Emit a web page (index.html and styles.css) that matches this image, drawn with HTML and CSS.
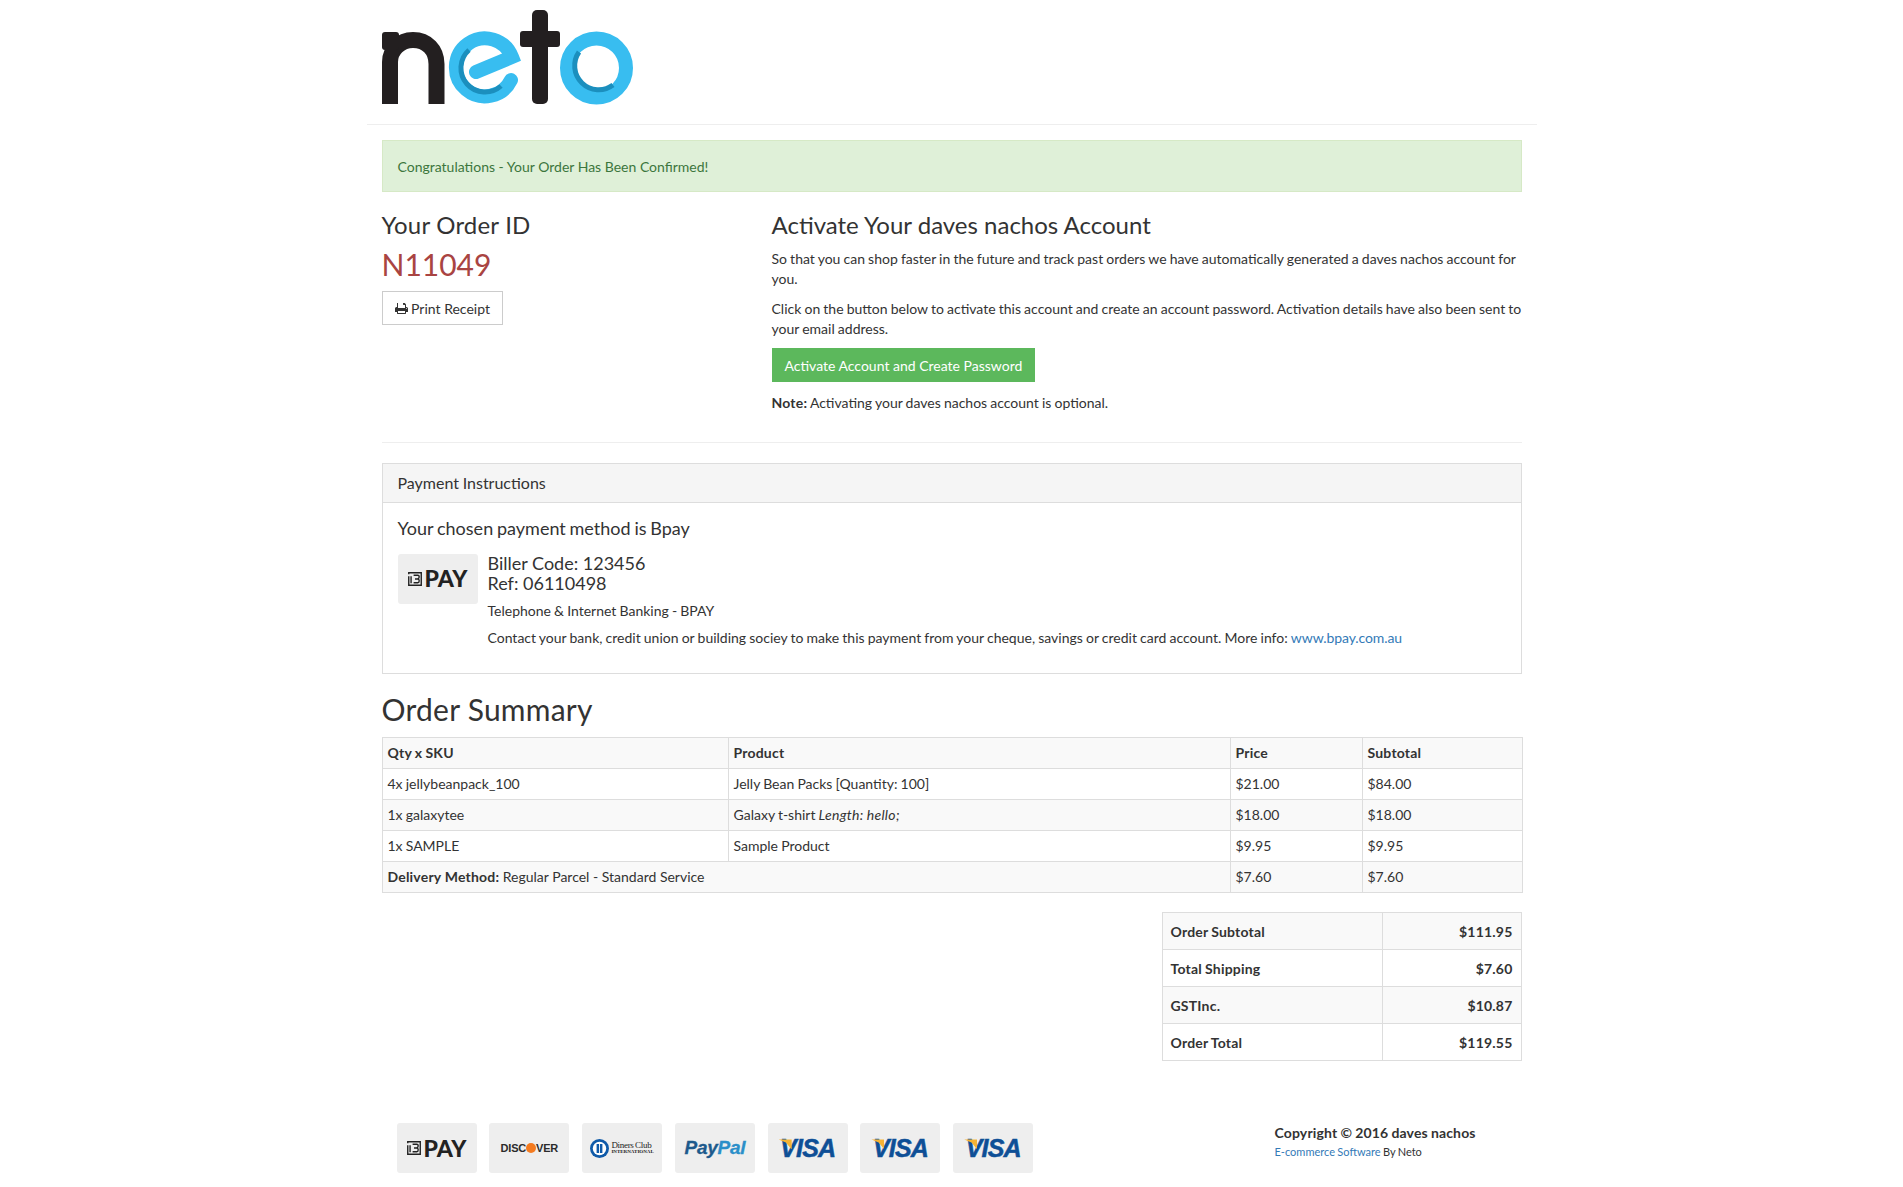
FILE: index.html
```html
<!DOCTYPE html>
<html lang="en">
<head>
    <meta charset="UTF-8">
    <meta name="viewport" content="width=device-width, initial-scale=1.0">
    <title>Order Confirmation</title>
    <link rel="stylesheet" href="styles.css">
</head>
<body>

<div class="container">

    <div class="site-header">
        <svg class="logo" width="260" height="100" viewBox="22 8 260 100" role="img" aria-label="neto">
            <path class="logo-n" d="M30 104V62C30 50 40 40 53 40C67 40 76.500 50 76.500 64V104"/>
            <rect class="logo-t" x="22" y="32" width="17" height="18" rx="3"/>
            <rect class="logo-t" x="172" y="10" width="16" height="94" rx="5"/>
            <rect class="logo-t" x="160" y="31" width="40" height="16" rx="3"/>
            <path class="logo-ring" d="M116 72L152 57A29 29 0 1 0 151 80"/>
            <path class="logo-shade" d="M109 50A24 24 0 0 0 141 86"/>
            <circle class="logo-ring" cx="236.5" cy="68" r="29.5"/>
            <path class="logo-shade" d="M219 52A24 24 0 0 0 253 85"/>
        </svg>
    </div>

    <div class="content">

        <div class="alert">Congratulations - Your Order Has Been Confirmed!</div>

        <div class="order-top">
            <div class="order-id">
                <h3>Your Order ID</h3>
                <div class="order-number">N11049</div>
                <a class="btn btn-default" href="#">
                    <svg class="print-icon" width="13" height="12" viewBox="0 128 1664 1536"><path d="M384 1408h896v-256h-896v256zm0-640h896v-384h-160q-40 0-68-28t-28-68v-160h-640v640zm1152 64q0-26-19-45t-45-19-45 19-19 45 19 45 45 19 45-19 19-45zm128 0v416q0 13-9.5 22.5t-22.5 9.5h-224v160q0 40-28 68t-68 28h-960q-40 0-68-28t-28-68v-160h-224q-13 0-22.5-9.5t-9.5-22.5v-416q0-79 56.5-135.5t135.5-56.5h64v-544q0-40 28-68t68-28h672q40 0 88 20t76 48l152 152q28 28 48 76t20 88v256h64q79 0 135.5 56.5t56.5 135.5z"/></svg>
                    Print Receipt
                </a>
            </div>
            <div class="activate">
                <h3>Activate Your daves nachos Account</h3>
                <p>So that you can shop faster in the future and track past orders we have automatically generated a daves nachos account for you.</p>
                <p>Click on the button below to activate this account and create an account password. Activation details have also been sent to your email address.</p>
                <a class="btn btn-success" href="#">Activate Account and Create Password</a>
                <p class="note"><strong>Note:</strong> Activating your daves nachos account is optional.</p>
            </div>
        </div>

        <hr>

        <div class="panel">
            <div class="panel-heading">Payment Instructions</div>
            <div class="panel-body">
                <h4 class="pay-method">Your chosen payment method is Bpay</h4>
                <div class="pay-info">
                    <div class="pay-card">
                        <svg class="bpay-icon" width="14" height="14" viewBox="0 0 15 15"><path d="M.8 4.5V14.2H14.2V.8H.8V2.5M3.3 4.5V12M6 3.500H10.500Q12 3.500 12 5.200T10.500 7.500H7.500M10.500 7.500Q12 7.500 12 9.500T10.500 11.500H6"/></svg>
                        <span class="bpay-text">PAY</span>
                    </div>
                    <div class="pay-details">
                        <h4>Biller Code: 123456<br>Ref: 06110498</h4>
                        <p class="pay-name">Telephone &amp; Internet Banking - BPAY</p>
                        <p>Contact your bank, credit union or building sociey to make this payment from your cheque, savings or credit card account. More info: <a class="pay-link" href="#">www.bpay.com.au</a></p>
                    </div>
                </div>
            </div>
        </div>

        <h2>Order Summary</h2>

        <table class="table items">
            <colgroup>
                <col class="col-sku">
                <col class="col-product">
                <col class="col-price">
                <col class="col-subtotal">
            </colgroup>
            <tr class="stripe">
                <th>Qty x SKU</th>
                <th>Product</th>
                <th>Price</th>
                <th>Subtotal</th>
            </tr>
            <tr>
                <td>4x jellybeanpack_100</td>
                <td>Jelly Bean Packs [Quantity: 100]</td>
                <td>$21.00</td>
                <td>$84.00</td>
            </tr>
            <tr class="stripe">
                <td>1x galaxytee</td>
                <td>Galaxy t-shirt <em>Length: hello;</em></td>
                <td>$18.00</td>
                <td>$18.00</td>
            </tr>
            <tr>
                <td>1x SAMPLE</td>
                <td>Sample Product</td>
                <td>$9.95</td>
                <td>$9.95</td>
            </tr>
            <tr class="stripe">
                <td class="delivery" colspan="2"><strong>Delivery Method:</strong> Regular Parcel - Standard Service</td>
                <td>$7.60</td>
                <td>$7.60</td>
            </tr>
        </table>

        <div class="totals-wrap">
            <table class="table totals">
                <colgroup>
                    <col class="col-label">
                    <col class="col-amount">
                </colgroup>
                <tr class="stripe">
                    <th>Order Subtotal</th>
                    <th class="amount">$111.95</th>
                </tr>
                <tr>
                    <th>Total Shipping</th>
                    <th class="amount">$7.60</th>
                </tr>
                <tr class="stripe">
                    <th>GSTInc.</th>
                    <th class="amount">$10.87</th>
                </tr>
                <tr>
                    <th>Order Total</th>
                    <th class="amount">$119.55</th>
                </tr>
            </table>
        </div>

        <div class="site-footer">
            <div class="pay-cards">
                <div class="pay-card">
                    <svg class="bpay-icon" width="14" height="14" viewBox="0 0 15 15"><path d="M.8 4.5V14.2H14.2V.8H.8V2.5M3.3 4.5V12M6 3.500H10.500Q12 3.500 12 5.200T10.500 7.500H7.500M10.500 7.500Q12 7.500 12 9.500T10.500 11.500H6"/></svg>
                    <span class="bpay-text">PAY</span>
                </div>
                <div class="pay-card">
                    <span class="discover">DISC<span class="discover-dot"></span>VER</span>
                </div>
                <div class="pay-card diners">
                    <svg width="19" height="19" viewBox="0 0 17 17"><circle cx="8.500" cy="8.500" r="8.500" fill="#0f5aa8"/><circle cx="8.500" cy="8.500" r="6" fill="#fff"/><path d="M7 4.500V12.500M10 4.500V12.500" stroke="#0f5aa8" stroke-width="2.200"/></svg>
                    <span class="diners-text">Diners Club<span class="diners-small">INTERNATIONAL</span></span>
                </div>
                <div class="pay-card">
                    <span class="paypal">Pay<span class="paypal-light">Pal</span></span>
                </div>
                <div class="pay-card visa-card"><span class="visa">VISA</span></div>
                <div class="pay-card visa-card"><span class="visa">VISA</span></div>
                <div class="pay-card visa-card"><span class="visa">VISA</span></div>
            </div>
            <div class="copyright">
                <div class="copy-main">Copyright &copy; 2016 daves nachos</div>
                <div class="copy-small"><a href="#">E-commerce Software</a> By Neto</div>
            </div>
        </div>

    </div>
</div>

</body>
</html>
```

FILE: styles.css
```css
body {
    margin: 0;
    background: white;
    font-family: "Lato", sans-serif;
    font-size: 14px;
    line-height: 20px;
    color: #333;
    word-spacing: -0.45px;
}
a {
    color: #337ab7;
    text-decoration: none;
}
strong {
    letter-spacing: 0.2px;
}
em {
    letter-spacing: 0.3px;
}
.container {
    width: 1170px;
    margin: 0 auto;
}
.site-header {
    height: 125px;
    padding: 8px 15px 0 15px;
    box-sizing: border-box;
    border-bottom: 1px solid #eee;
}
.logo {
    display: block;
}
.logo-n {
    fill: none;
    stroke: #231f20;
    stroke-width: 16;
}
.logo-t {
    fill: #231f20;
}
.logo-ring {
    fill: none;
    stroke: #38bdf0;
    stroke-width: 14;
    stroke-linecap: round;
}
.logo-shade {
    fill: none;
    stroke: #1b8fbe;
    stroke-width: 5;
}
.content {
    padding: 15px 15px 0 15px;
}
.alert {
    padding: 16px 15px 14px 15px;
    background: #dff0d8;
    border: 1px solid #d6e9c6;
    color: #3c763d;
    margin-bottom: 20px;
    word-spacing: 0;
}
h2, h3, h4 {
    font-weight: 400;
    line-height: 1.1;
    margin: 0;
    word-spacing: 0;
}
h3 {
    font-size: 24px;
    margin-bottom: 10px;
}
h4 {
    font-size: 18px;
}
.pay-method {
    word-spacing: -0.8px;
}
p {
    margin: 0 0 9px 0;
    padding-top: 1px;
}
.order-top {
    display: flex;
}
.order-id {
    width: 390px;
    flex: none;
}
.order-id h3 {
    letter-spacing: 0.2px;
}
.activate {
    flex: 1;
}
.order-number {
    font-size: 30px;
    line-height: 33px;
    color: #a94442;
    margin-bottom: 10px;
}
.btn {
    display: inline-block;
    padding: 7px 12px 5px 12px;
    border: 1px solid transparent;
    word-spacing: 0;
}
.btn-default {
    color: #333;
    background: white;
    border-color: #ccc;
}
.btn-success {
    color: white;
    background: #5cb85c;
    border-color: #5cb85c;
}
.print-icon {
    fill: #333;
    vertical-align: -1px;
}
.note {
    margin-top: 10px;
}
hr {
    margin: 20px 0;
    border: 0;
    border-top: 1px solid #eee;
}
.panel {
    border: 1px solid #ddd;
    margin-bottom: 19px;
}
.panel-heading {
    padding: 10px 15px;
    background: #f5f5f5;
    border-bottom: 1px solid #ddd;
    font-size: 16px;
    line-height: 17.6px;
}
.panel-body {
    padding: 16px 15px 16px 15px;
}
.pay-info {
    display: flex;
    gap: 10px;
    margin-top: 15px;
}
.pay-details {
    flex: 1;
}
.pay-name {
    margin: 7px 0 6px 0;
}
.pay-details p:last-child {
    margin-bottom: 9px;
}
.pay-link {
    letter-spacing: -0.1px;
}
.pay-card {
    width: 80px;
    height: 50px;
    flex: none;
    display: flex;
    align-items: center;
    justify-content: center;
    gap: 3px;
    background: #eee;
    border-radius: 3px;
    position: relative;
}
.bpay-icon {
    fill: none;
    stroke: #222;
    stroke-width: 1.5;
}
.bpay-text {
    font-family: "Lato", sans-serif;
    font-weight: 900;
    font-size: 23px;
    line-height: 1;
    color: #222;
}
.discover {
    display: flex;
    align-items: center;
    font-family: "Liberation Sans", sans-serif;
    font-weight: 700;
    font-size: 11px;
    letter-spacing: -0.2px;
    color: #2b2b2b;
}
.discover-dot {
    width: 10px;
    height: 10px;
    border-radius: 50%;
    background: #f47b20;
}
.diners {
    gap: 2px;
}
.diners-text {
    font-family: "Liberation Serif", serif;
    font-size: 9px;
    line-height: 7px;
    color: #222;
    letter-spacing: -0.3px;
}
.diners-small {
    display: block;
    font-size: 5px;
    font-weight: 700;
    line-height: 6px;
    letter-spacing: 0;
}
.paypal {
    font-family: "Liberation Sans", sans-serif;
    font-weight: 700;
    font-style: italic;
    font-size: 19px;
    color: #1d5a8c;
    letter-spacing: -0.3px;
    -webkit-text-stroke: 0.3px;
}
.paypal-light {
    color: #2a8fc9;
}
.visa {
    font-family: "Liberation Sans", sans-serif;
    font-weight: 700;
    font-style: italic;
    font-size: 25px;
    letter-spacing: -0.8px;
    color: #0e4f96;
    -webkit-text-stroke: 0.5px;
}
.visa-card::before {
    content: "";
    position: absolute;
    left: 11px;
    top: 16px;
    width: 13px;
    height: 10px;
    background: #f5b335;
    clip-path: polygon(0 0, 100% 0, 100% 100%, 55% 30%);
}
h2 {
    font-size: 30px;
    line-height: 33px;
    margin-bottom: 11px;
    letter-spacing: 0.25px;
}
.table {
    border-collapse: collapse;
    table-layout: fixed;
    border: 1px solid #ddd;
}
.table th, .table td {
    border: 1px solid #ddd;
    text-align: left;
    font-weight: 400;
}
.table th {
    font-weight: 700;
    letter-spacing: 0.2px;
}
.stripe {
    background: #f9f9f9;
}
.items {
    width: 100%;
    margin-bottom: 19px;
}
.items th, .items td {
    padding: 5px;
}
.delivery {
    word-spacing: 0;
}
.col-sku { width: 346px; }
.col-product { width: 502px; }
.col-price { width: 132px; }
.col-subtotal { width: 160px; }
.totals-wrap {
    display: flex;
    justify-content: flex-end;
}
.totals {
    width: 359px;
}
.totals th {
    padding: 9px 8px 7px 8px;
}
.totals .amount {
    text-align: right;
}
.col-label { width: 220px; }
.col-amount { width: 139px; }
.site-footer {
    display: flex;
    justify-content: space-between;
    padding: 62px 15px 0 15px;
    height: 64px;
}
.pay-cards {
    display: flex;
    gap: 12.8px;
}
.copyright {
    width: 232px;
}
.copy-main {
    font-weight: 700;
    letter-spacing: 0.15px;
}
.copy-small {
    font-size: 11px;
    line-height: 16px;
    margin-top: 1px;
}
```
